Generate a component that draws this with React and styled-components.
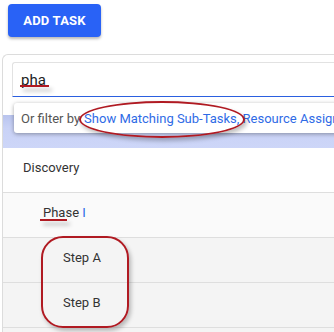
import React from 'react';
import styled, { createGlobalStyle } from 'styled-components';

const GlobalStyle = createGlobalStyle`
  html, body {
    margin: 0;
    padding: 0;
    background: #ffffff;
    overflow: hidden;
  }
  body {
    font-family: Roboto, "Liberation Sans", Arial, sans-serif;
  }
`;

const Page = styled.div`
  position: relative;
  width: 334px;
  height: 332px;
  padding: 4px 0 0 2px;
  box-sizing: border-box;
  overflow: hidden;
`;

const AddButton = styled.button`
  display: flex;
  align-items: center;
  justify-content: center;
  margin-left: 6px;
  width: 93px;
  height: 33px;
  border: none;
  border-radius: 4px;
  background: #2962f6;
  color: #ffffff;
  font-family: Roboto, "Liberation Sans", Arial, sans-serif;
  font-size: 13px;
  font-weight: 700;
  letter-spacing: 0.2px;
  box-shadow: 0 2px 3px rgba(0, 0, 0, 0.28);
  cursor: pointer;
`;

const Panel = styled.div`
  position: relative;
  margin-top: 17px;
  border: 1px solid #dcdcdc;
  border-right: none;
  border-top-left-radius: 6px;
  background: #ffffff;
`;

const SearchArea = styled.div`
  padding: 7px 0 0 9px;
  height: 53px;
`;

const SearchInput = styled.div`
  display: flex;
  align-items: center;
  height: 33px;
  padding-left: 8px;
  border-top: 1px solid #e2e2e2;
  border-left: 1px solid #e2e2e2;
  border-bottom: 1.5px solid #2b5fe0;
  border-top-left-radius: 3px;
  font-size: 15px;
  color: #222;
`;

const HeaderBand = styled.div`
  height: 33px;
  background: linear-gradient(180deg, #b9c4ee 0%, #c9d2f6 40%, #cdd6f8 100%);
`;

/* the label sits a little above the row's middle */
const Row = styled.div`
  display: flex;
  align-items: center;
  box-sizing: border-box;
  height: 45px;
  padding: 0 0 6px ${({ indent }) => 20 + indent * 20}px;
  border-bottom: 1px solid #dedede;
  background: ${({ shade }) => shade};
  font-size: 13px;
  color: #333;
`;

const Highlight = styled.span`
  color: #2a6ae8;
`;

const FilterMenu = styled.div`
  position: absolute;
  left: 11px;
  top: 48px;
  width: 340px;
  height: 30px;
  display: flex;
  align-items: center;
  padding-left: 7px;
  background: #ffffff;
  border-radius: 3px;
  box-shadow: 0 1px 4px rgba(0, 0, 0, 0.35);
  font-size: 13px;
  color: #555;
  white-space: nowrap;
`;

const FilterLink = styled.span`
  color: #2f6be6;
  margin-left: 4px;
`;

// red annotation marks drawn over the screenshot
const Mark = styled.div`
  position: absolute;
  left: ${({ x }) => x}px;
  top: ${({ y }) => y}px;
  width: ${({ w }) => w}px;
  height: ${({ h }) => h}px;
  border: 2px solid #b01a22;
  border-radius: ${({ r }) => r};
  box-shadow: 2px 3px 4px rgba(0, 0, 0, 0.25);
  pointer-events: none;
  box-sizing: border-box;
`;

const Underline = styled.div`
  position: absolute;
  left: ${({ x }) => x}px;
  top: ${({ y }) => y}px;
  width: ${({ w }) => w}px;
  height: 2px;
  background: #b01a22;
  box-shadow: 3px 4px 4px rgba(0, 0, 0, 0.3);
  pointer-events: none;
`;

const rows = [
  { label: 'Discovery', indent: 0, shade: '#ffffff' },
  { label: 'Phase', suffix: 'I', indent: 1, shade: '#fafafa' },
  { label: 'Step A', indent: 2, shade: '#f4f4f4' },
  { label: 'Step B', indent: 2, shade: '#f4f4f4' },
  { label: '', indent: 2, shade: '#f4f4f4' },
];

export default function App() {
  return (
    <>
      <GlobalStyle />
      <Page>
        <AddButton>ADD TASK</AddButton>
        <Panel>
          <SearchArea>
            <SearchInput>pha</SearchInput>
          </SearchArea>
          <HeaderBand />
          {rows.map((row, i) => (
            <Row key={i} indent={row.indent} shade={row.shade}>
              {row.label}
              {row.suffix && <Highlight>&nbsp;{row.suffix}</Highlight>}
            </Row>
          ))}
          <FilterMenu>
            Or filter by
            <FilterLink>Show Matching Sub-Tasks, Resource Assignments</FilterLink>
          </FilterMenu>
        </Panel>
        <Underline x={20} y={85} w={29} />
        <Mark x={79} y={101} w={166} h={37} r="50%" />
        <Underline x={40} y={219} w={27} />
        <Mark x={41} y={236} w={88} h={92} r="22px" />
      </Page>
    </>
  );
}
